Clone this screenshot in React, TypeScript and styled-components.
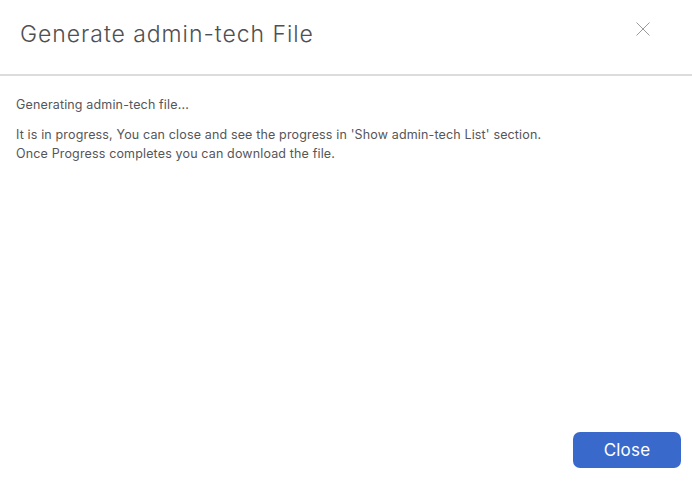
import React from "react";
import styled, { createGlobalStyle } from "styled-components";

const Global = createGlobalStyle`
  html, body { margin: 0; padding: 0; background: #ffffff; }
  body { font-family: Inter, "Noto Sans", sans-serif; }
  #root { height: 487px; }
`;

const Dialog = styled.div`
  display: flex;
  flex-direction: column;
  height: 487px;
  width: 692px;
  box-sizing: border-box;
  background: #fff;
`;

const Header = styled.div`
  display: flex;
  align-items: center;
  justify-content: space-between;
  height: 76px;
  box-sizing: border-box;
  padding: 0 41px 6px 20px;
  border-bottom: 2px solid #dcdcde;
`;

const Title = styled.h1`
  margin: 0;
  font-family: Inter, sans-serif;
  font-weight: 300;
  font-size: 23px;
  color: #4f5053;
  letter-spacing: 0.95px;
`;

const CloseIcon = styled.button`
  border: 0;
  background: none;
  padding: 0;
  width: 16px;
  height: 16px;
  display: flex;
  cursor: pointer;
  margin-top: -10px;
`;

const Body = styled.div`
  flex: 1;
  padding: 19px 16px 0;
  font-size: 12.5px;
  line-height: 19px;
  letter-spacing: 0.15px;
  color: #555659;
`;

const Para = styled.p`
  margin: 0 0 11px;
`;

const Footer = styled.div`
  display: flex;
  justify-content: flex-end;
  padding: 0 11px 19px;
`;

const Button = styled.button`
  width: 108px;
  height: 36px;
  border: 0;
  border-radius: 7px;
  background: #3a69cc;
  color: #fff;
  font-family: Inter, sans-serif;
  font-size: 17px;
  letter-spacing: 0.2px;
  cursor: pointer;
`;

export default function App() {
  return (
    <>
      <Global />
      <Dialog>
        <Header>
          <Title>Generate admin-tech File</Title>
          <CloseIcon aria-label="close">
            <svg width="16" height="16" viewBox="0 0 16 16">
              <path d="M1.5 1.5 L14.5 14.5 M14.5 1.5 L1.5 14.5" stroke="#9a9a9c" strokeWidth="1" fill="none" />
            </svg>
          </CloseIcon>
        </Header>
        <Body>
          <Para>Generating admin-tech file...</Para>
          <Para>
            It is in progress, You can close and see the progress in 'Show admin-tech List' section.
            <br />
            Once Progress completes you can download the file.
          </Para>
        </Body>
        <Footer>
          <Button>Close</Button>
        </Footer>
      </Dialog>
    </>
  );
}
